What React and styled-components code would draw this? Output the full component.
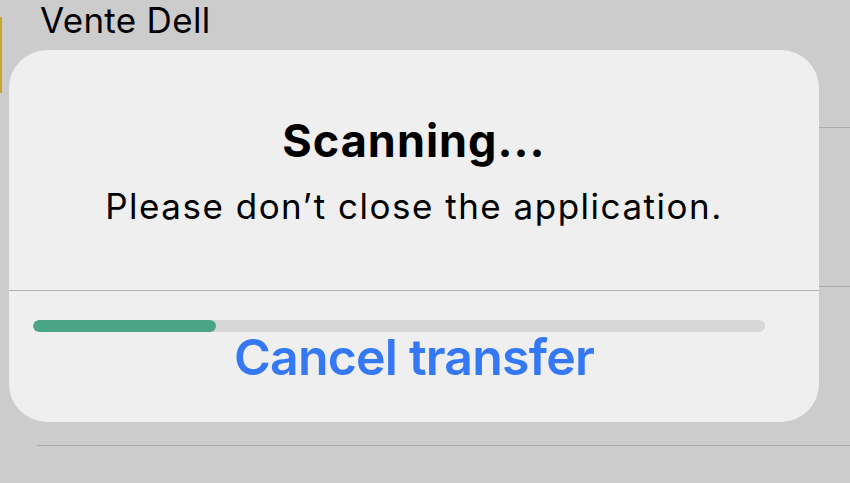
import React from 'react'
import styled, { createGlobalStyle } from 'styled-components'

const GlobalStyle = createGlobalStyle`
  html, body {
    margin: 0;
    padding: 0;
    background: #cccccc;
    font-family: Inter, "Noto Sans", "Liberation Sans", sans-serif;
    -webkit-font-smoothing: antialiased;
  }
`

const Screen = styled.div`
  position: relative;
  width: 850px;
  height: 483px;
  overflow: hidden;
  background: #cccccc;
`

const List = styled.div`
  display: flex;
  flex-direction: column;
`

const Row = styled.div`
  display: flex;
  align-items: flex-start;
  height: ${p => p.height}px;
  margin-left: 37px;
  border-bottom: 1px solid #a9a9a9;
  box-sizing: border-box;
`

const FirstRow = styled(Row)`
  margin-left: 0;
  border-bottom: none;
`

const Thumb = styled.div`
  width: 2px;
  height: 76px;
  margin-top: 17px;
  background: #c9a52e;
`

const RowTitle = styled.div`
  margin-left: 38px;
  font-size: 35px;
  line-height: 40px;
  letter-spacing: 0.3px;
  color: #000;
`

const Separator = styled.div`
  height: 1px;
  margin-left: 37px;
  background: #a9a9a9;
`

const Dialog = styled.div`
  position: absolute;
  left: 9px;
  top: 50px;
  width: 810px;
  height: 372px;
  border-radius: 38px;
  background: #efefef;
  display: flex;
  flex-direction: column;
  overflow: hidden;
`

const Header = styled.div`
  display: flex;
  flex-direction: column;
  align-items: center;
  padding: 65px 0 64px;
  border-bottom: 1px solid #b3b3b3;
`

const Title = styled.div`
  font-size: 45px;
  line-height: 52px;
  font-weight: 700;
  letter-spacing: 1px;
  color: #000;
`

const Message = styled.div`
  margin-top: 19px;
  font-size: 35px;
  line-height: 40px;
  letter-spacing: 1.5px;
  color: #000;
`

const Footer = styled.div`
  display: flex;
  flex-direction: column;
  padding-top: 29px;
`

const Track = styled.div`
  height: 12px;
  margin: 0 54px 0 24px;
  border-radius: 6px;
  background: #d7d7d7;
  overflow: hidden;
`

const Fill = styled.div`
  height: 100%;
  border-radius: 6px;
  background: #4aa587;
`

const CancelButton = styled.button`
  align-self: center;
  border: none;
  background: none;
  padding: 0;
  font-family: inherit;
  font-size: 50px;
  line-height: 50px;
  font-weight: 600;
  letter-spacing: -0.8px;
  color: #3478f6;
`

export default function App() {
  const progress = 0.25
  return (
    <Screen>
      <GlobalStyle />
      <List>
        <FirstRow height={127}>
          <Thumb />
          <RowTitle>Vente Dell</RowTitle>
        </FirstRow>
        <Separator />
        <Row height={159} />
        <Row height={159} />
      </List>
      <Dialog>
        <Header>
          <Title>Scanning...</Title>
          <Message>Please don’t close the application.</Message>
        </Header>
        <Footer>
          <Track>
            <Fill style={{ width: `${progress * 100}%` }} />
          </Track>
          <CancelButton>Cancel transfer</CancelButton>
        </Footer>
      </Dialog>
    </Screen>
  )
}
